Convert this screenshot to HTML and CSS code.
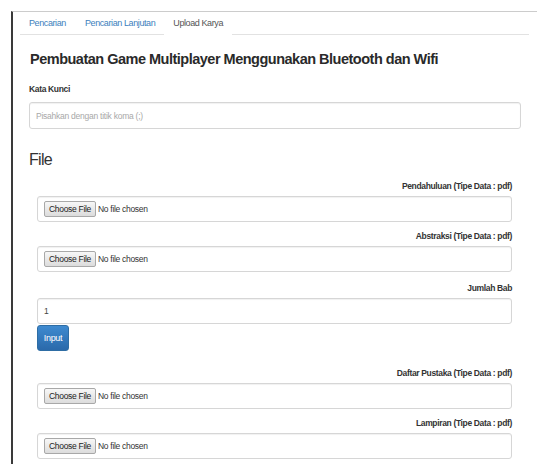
FILE: index.html
```html
<!DOCTYPE html>
<html lang="id">
<head>
<meta charset="utf-8">
<title>Upload Karya</title>
<link rel="stylesheet" href="styles.css">
</head>
<body>
<div class="frame">
  <ul class="tabs">
    <li class="tab"><a href="#">Pencarian</a></li>
    <li class="tab"><a href="#">Pencarian Lanjutan</a></li>
    <li class="tab active"><a href="#">Upload Karya</a></li>
  </ul>

  <form class="content">
    <h3 class="title">Pembuatan Game Multiplayer Menggunakan Bluetooth dan Wifi</h3>

    <label class="label" for="kunci">Kata Kunci</label>
    <input id="kunci" class="control" type="text" placeholder="Pisahkan dengan titik koma (;)">

    <h2 class="section">File</h2>

    <div class="files">
      <div class="field">
        <label class="label right" for="f1">Pendahuluan (Tipe Data : pdf)</label>
        <input id="f1" class="control file" type="file">
      </div>
      <div class="field">
        <label class="label right" for="f2">Abstraksi (Tipe Data : pdf)</label>
        <input id="f2" class="control file" type="file">
      </div>
      <div class="field bab">
        <label class="label right" for="bab">Jumlah Bab</label>
        <input id="bab" class="control number" type="text" value="1">
        <button class="btn-primary" type="button">Input</button>
      </div>
      <div class="field">
        <label class="label right" for="f3">Daftar Pustaka (Tipe Data : pdf)</label>
        <input id="f3" class="control file" type="file">
      </div>
      <div class="field">
        <label class="label right" for="f4">Lampiran (Tipe Data : pdf)</label>
        <input id="f4" class="control file" type="file">
      </div>
    </div>
  </form>
</div>
</body>
</html>
```
FILE: styles.css
```css
* {
  box-sizing: border-box;
}

html, body {
  margin: 0;
  background: #ffffff;
}

body {
  font-family: "Liberation Sans", Arial, Helvetica, sans-serif;
  color: #333333;
  height: 464px;
  overflow: hidden;
}

/* outer panel edge */
.frame {
  margin: 11px 0 0 11px;
  border-left: 2px solid #3a3a3a;
  border-top: 1px solid #cccccc;
  min-height: 453px;
}

/* navigation tabs */
.tabs {
  list-style: none;
  margin: 0 8px 0 7px;
  padding: 0;
  display: flex;
  border-bottom: 1px solid #e2e2e2;
  height: 23px;
}

.tab {
  margin-bottom: -1px;
}

.tab a {
  display: block;
  padding: 0 9px;
  line-height: 22px;
  font-size: 9px;
  letter-spacing: -0.4px;
  color: #3d7fbd;
  text-decoration: none;
  border-bottom: 1px solid transparent;
}

.tab + .tab {
  margin-left: 1px;
}

.tab.active {
  margin-left: 0;
}

.tab.active a {
  color: #555555;
  background: #ffffff;
  border-bottom-color: #ffffff;
}

/* main form */
.content {
  padding: 0 16px;
}

.title {
  margin: 14px 0 0 1px;
  font-size: 14.5px;
  letter-spacing: -0.5px;
  line-height: 20px;
  font-weight: bold;
  color: #2a2a2a;
  white-space: nowrap;
}

.label {
  display: block;
  font-size: 8.5px;
  letter-spacing: -0.35px;
  line-height: 12px;
  font-weight: bold;
  color: #333333;
}

.content > .label {
  margin: 14px 0 7px;
}

.label.right {
  text-align: right;
  margin-bottom: 4px;
}

.control {
  display: block;
  width: 100%;
  height: 27px;
  padding: 0 6px;
  border: 1px solid #d6d6d6;
  border-radius: 3px;
  box-shadow: inset 0 1px 1px rgba(0, 0, 0, 0.06);
  background: #ffffff;
  font-family: inherit;
  font-size: 8.5px;
  letter-spacing: -0.3px;
  color: #555555;
  outline: none;
}

.control::placeholder {
  color: #a8a8a8;
  letter-spacing: -0.25px;
}

.section {
  margin: 21px 0 10px 0;
  font-size: 16px;
  letter-spacing: -0.7px;
  line-height: 20px;
  font-weight: normal;
  color: #333333;
}

.files {
  padding: 0 9px 0 8px;
}

.field {
  margin-bottom: 8px;
}

.field.bab {
  margin-top: 10px;
  margin-bottom: 16px;
}

.control.file {
  height: 26px;
  padding: 4px 6px;
  color: #333333;
}

.control.file::file-selector-button {
  height: 16px;
  width: 52px;
  padding: 0;
  margin-right: 2px;
  font-family: inherit;
  font-size: 8.5px;
  letter-spacing: -0.3px;
  color: #222222;
  border: 1px solid #a8a8a8;
  border-radius: 2px;
  background: linear-gradient(#f7f7f7, #dcdcdc);
}

.control.number {
  height: 26px;
  color: #444444;
}

.btn-primary {
  display: block;
  height: 26px;
  width: 32px;
  margin-top: 1px;
  padding: 0;
  border: 1px solid #2e6da4;
  border-radius: 3px;
  background: linear-gradient(#3e8ad0, #2a69aa);
  color: #ffffff;
  font-family: inherit;
  font-size: 9px;
  letter-spacing: -0.3px;
}
```
